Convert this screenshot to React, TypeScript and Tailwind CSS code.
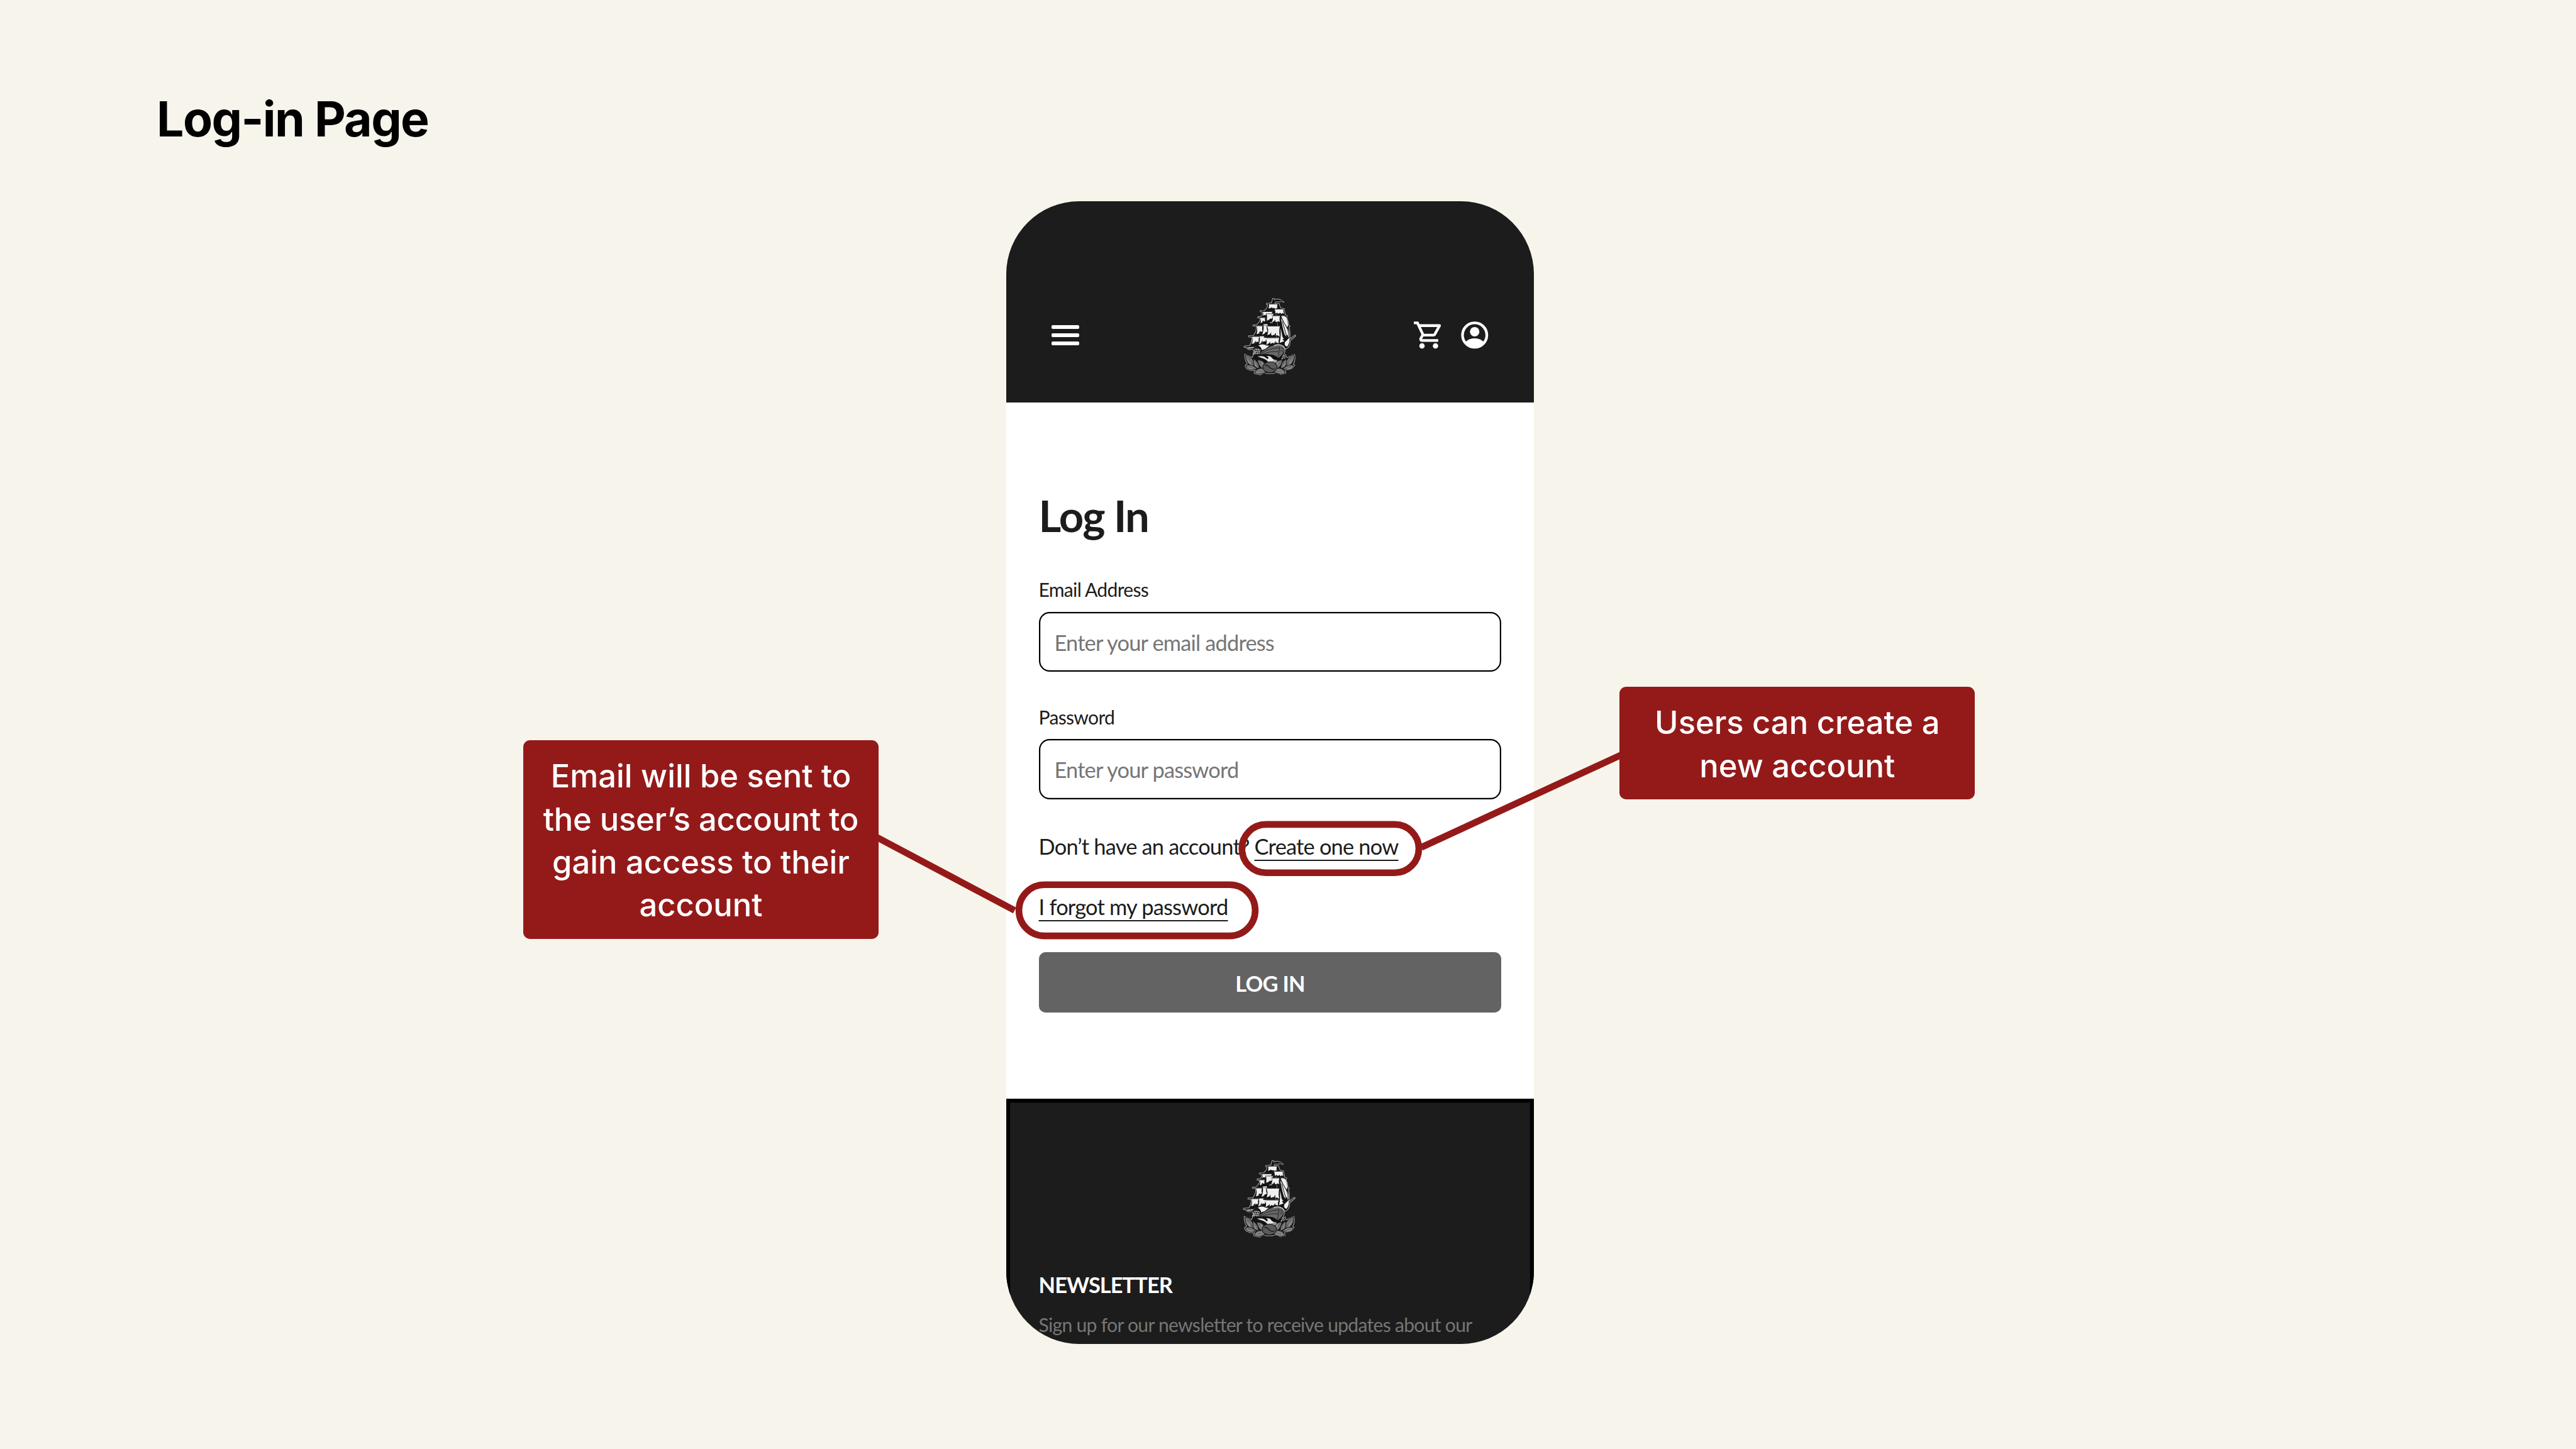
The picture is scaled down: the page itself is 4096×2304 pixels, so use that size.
const INK = "#141414";

const sails = [
  "M260 89 L314 89 Q309 102 313 116 L306 112 L300 118 L292 111 L284 113 L276 108 L268 114 Q262 113 258 116 Q264 102 260 89 Z",
  "M296 121 L351 121 Q348 134 355 148 L345 144 L338 149 L330 142 L320 148 L312 142 L300 147 Q303 134 296 121 Z",
  "M223 137 L281 137 L279 147 L244 148 L240 158 L232 155 Q226 158 223 162 Q228 149 223 137 Z",
  "M245 149 L290 149 Q280 162 283 178 L270 178 L260 186 L242 194 Q254 170 245 149 Z",
  "M206 174 L238 174 Q233 184 238 194 L226 195 L220 202 L209 206 Q213 188 206 174 Z",
  "M283 162 L329 162 Q324 180 329 199 L318 194 L308 200 L298 194 L278 200 Q290 180 283 162 Z",
  "M184 225 L220 225 Q216 242 221 258 L210 260 L204 268 L184 275 Q192 248 184 225 Z",
  "M226 214 L250 212 L255 222 L246 226 Q246 244 252 260 L240 262 L234 271 L218 278 Q232 246 226 214 Z",
  "M249 227 L328 227 Q322 258 328 289 L312 281 L300 286 L290 278 L280 284 L272 274 L250 280 Q262 254 249 227 Z",
  "M156 291 L200 291 Q194 306 197 322 L184 322 L176 330 L154 335 Q164 312 156 291 Z",
  "M202 289 L231 285 L228 296 L244 298 Q238 310 242 318 L226 320 L218 330 L198 336 Q208 312 202 289 Z",
  "M238 299 L325 299 Q318 314 321 332 L306 326 L294 334 L282 328 L270 336 L258 332 L242 344 Q254 322 238 299 Z",
  "M331 168 Q348 196 366 228 Q382 252 379 284 L372 278 L368 290 L358 276 Q346 240 331 168 Z",
  "M337 163 Q354 158 367 168 Q378 190 379 216 Q378 230 374 232 Q354 204 337 163 Z",
  "M332 236 Q342 268 344 290 L354 304 L344 306 L356 318 L327 329 Q338 286 332 236 Z",
  "M380 236 Q388 262 386 290 L380 296 Q384 262 380 236 Z",
  "M360 324 Q374 312 388 296 Q391 332 374 352 Q364 352 358 338 Z",
  "M194 346 Q222 330 246 346 L264 346 L238 366 L216 374 Q214 354 194 346 Z",
  "M124 358 L170 356 Q162 366 150 361 Q140 368 124 358 Z",
];

const spars = [
  "M244 86 H324",
  "M288 118 H356",
  "M206 133 H286",
  "M240 147 H294",
  "M190 170 H240",
  "M276 159 H374",
  "M162 221 H258",
  "M244 224 H332",
  "M134 287 H204",
  "M200 287 H246",
  "M236 296 H328",
  "M108 352 H184",
];

const folds =
  "M238 196 L250 180 L248 194 Z M264 276 L276 264 L272 280 Z M290 286 L304 266 L304 284 Z M196 268 L208 254 L210 264 Z M166 332 L178 316 L180 328 Z M208 334 L220 314 L222 326 Z M254 340 L268 322 L270 334 Z M290 334 L304 316 L302 330 Z M288 198 L300 186 L300 198 Z M216 202 L226 188 L226 198 Z";

const leafPaths = [
  "M116 401 Q166 420 172 468 Q156 478 142 466 Q112 440 116 401 Z",
  "M116 471 Q148 454 188 492 Q162 504 136 494 Q122 486 116 471 Z",
  "M164 428 Q196 446 202 490 Q178 486 167 466 Z",
  "M188 436 Q226 434 234 464 Q228 482 230 490 Q202 486 188 436 Z",
  "M172 518 Q182 482 226 488 Q236 504 240 513 Q202 530 172 518 Z",
];

/** Full-rigged ship riding above a coffee bean framed by leaves. */
function ShipLogo({ className }: { className: string }) {
  return (
    <svg viewBox="0 0 540 570" className={className} aria-label="Ship logo">
      <defs>
        <linearGradient id="leaf" x1="0" y1="0" x2="1" y2="1">
          <stop offset="0.1" stopColor="#707070" />
          <stop offset="0.6" stopColor="#8c8c8c" />
          <stop offset="1" stopColor="#4e4e4e" />
        </linearGradient>
        <linearGradient id="hull" x1="0" y1="1" x2="1" y2="0">
          <stop offset="0" stopColor="#2c2c2c" />
          <stop offset="0.4" stopColor="#6a6a6a" />
          <stop offset="1" stopColor="#5e5e5e" />
        </linearGradient>
      </defs>
      <path
        d="M284 53 L294 53 L294 62 Q314 52 336 62 L354 76 Q338 70 322 74 L302 74 L296 84 L324 84 L328 98 L334 112 L356 116 L356 124 L360 140 L362 156 L374 158 L374 168 L370 172 Q384 196 382 218 L392 224 L386 232 Q394 264 391 304 L422 280 L428 286 L392 318 Q394 346 376 362 L362 366 L358 392 L346 412 Q350 428 362 422 L352 410 L366 402 L366 414 L376 420 L420 399 Q428 436 412 462 L421 468 Q410 492 376 498 L360 500 L366 518 L334 526 L310 512 L286 520 L248 520 L232 514 L208 527 L174 522 L168 516 L176 500 Q136 504 118 484 L112 470 L126 460 Q108 430 111 398 L156 420 L172 386 L160 370 L132 370 L120 358 L106 356 L107 349 L140 346 Q158 320 154 294 L134 292 L134 284 L164 283 Q186 256 182 226 L162 225 L161 218 L184 216 Q208 196 206 176 L190 173 L192 166 L212 164 Q224 150 218 138 L206 136 L206 129 L232 128 Q254 110 252 92 L244 90 L244 84 L276 80 Z"
        fill={INK}
        stroke="#a9a9a9"
        strokeWidth="4"
        strokeLinejoin="round"
      />
      <path d="M289 58 V86 M304 68 Q326 60 346 72" stroke="#101010" strokeWidth="5" fill="none" />
      {sails.map((d) => (
        <path key={d} d={d} fill="#efefef" />
      ))}
      <path d={folds} fill={INK} />
      {spars.map((d) => (
        <path key={d} d={d} stroke="#4c4c4c" strokeWidth="2.5" fill="none" />
      ))}
      <path d="M331 166 Q346 238 352 300 M344 196 Q358 246 370 286" stroke={INK} strokeWidth="4" fill="none" />
      <path d="M308 150 V160 M314 202 V224 M308 288 V297 M320 290 V297" stroke="#b0b0b0" strokeWidth="2.5" />
      <ellipse cx="275" cy="203" rx="10" ry="4" fill="#8a8a8a" />

      {/* rigging at the stern */}
      <path
        d="M176 362 L160 402 M187 362 L173 402 M198 364 L186 400 M206 372 L198 396 M172 370 H206 M168 382 H206 M164 393 H202"
        stroke="#dcdcdc"
        strokeWidth="3"
        fill="none"
      />
      <path d="M388 314 L424 284" stroke="#8f8f8f" strokeWidth="2" />

      {/* hull */}
      <path
        d="M184 402 Q228 378 268 352 Q304 334 344 346 Q362 356 358 378 Q344 404 320 424 Q296 400 252 400 Q214 398 184 402 Z"
        fill="url(#hull)"
      />
      <path d="M292 346 Q324 332 350 350 L362 368" stroke="#cfcfcf" strokeWidth="5" fill="none" />
      <path
        d="M206 397 Q256 364 326 358 M222 400 Q270 378 322 384 M328 354 L318 420 M336 360 L356 368 M334 378 L352 380"
        stroke={INK}
        strokeWidth="3"
        fill="none"
      />
      <path d="M168 406 Q240 396 286 404 Q308 412 320 426 L346 416 L338 440 L300 440 L256 400 Z" fill="#0f0f0f" />

      {/* wave */}
      <path
        d="M190 413 Q226 406 244 424 Q254 434 257 424 Q258 414 246 411 Q270 408 280 424 Q290 437 310 436 L312 450 L258 450 Q244 430 220 424 Q206 420 190 413 Z"
        fill="#e6e6e6"
      />
      <path d="M264 452 Q282 436 310 438 L310 454 Z" fill="#9b9b9b" />
      <path d="M336 432 L346 416 L346 430 Z" fill="#dcdcdc" />

      {/* leaves, mirrored around the bean */}
      {["", "translate(534 0) scale(-1 1)"].map((transform) => (
        <g key={transform} transform={transform}>
          {leafPaths.map((d) => (
            <path key={d} d={d} fill="url(#leaf)" stroke={INK} strokeWidth="3" />
          ))}
          <path
            d="M128 420 Q146 440 160 464 M138 420 Q152 438 160 454 M136 476 Q156 482 174 490 M202 448 Q214 464 226 482 M180 450 L190 474 M194 510 Q212 504 226 502"
            stroke="#333333"
            strokeWidth="2.5"
            fill="none"
          />
        </g>
      ))}
      <ellipse cx="267" cy="480" rx="46" ry="36" fill={INK} />
      <ellipse cx="267" cy="480" rx="42" ry="32" fill="#5a5a5a" />
      <path d="M236 468 Q252 466 264 480 Q276 494 297 492" stroke={INK} strokeWidth="5" fill="none" strokeLinecap="round" />
    </svg>
  );
}

function MenuIcon() {
  return (
    <div className="flex h-[31.6px] w-[43.6px] flex-col justify-between">
      <span className="h-[5.8px] rounded-[2px] bg-white" />
      <span className="h-[5.8px] rounded-[2px] bg-white" />
      <span className="h-[5.8px] rounded-[2px] bg-white" />
    </div>
  );
}

function CartIcon() {
  return (
    <svg viewBox="0 0 24 24" className="size-[51.6px] fill-white">
      <path d="M15.55 13c.75 0 1.41-.41 1.75-1.03l3.58-6.49c.37-.66-.11-1.48-.87-1.48H5.21l-.94-2H1v2h2l3.6 7.59-1.35 2.44C4.52 15.37 5.48 17 7 17h12v-2H7l1.1-2h7.45zM6.16 6h12.15l-2.76 5H8.53L6.16 6zM7 18c-1.1 0-1.99.9-1.99 2S5.9 22 7 22s2-.9 2-2-.9-2-2-2zm10 0c-1.1 0-1.99.9-1.99 2s.89 2 1.99 2 2-.9 2-2-.9-2-2-2z" />
    </svg>
  );
}

function AccountIcon() {
  return (
    <svg viewBox="0 0 24 24" className="size-[51.6px]">
      <circle cx="12" cy="12" r="9" fill="none" stroke="white" strokeWidth="2" />
      <circle cx="12" cy="9.5" r="3.5" fill="white" />
      <path d="M5.4 16.9 Q8.3 14.4 12 14.4 T18.6 16.9 A8.9 8.9 0 0 1 12 21 A8.9 8.9 0 0 1 5.4 16.9 Z" fill="white" />
    </svg>
  );
}

function Field({ label, placeholder, className }: { label: string; placeholder: string; className: string }) {
  return (
    <div className={className}>
      <div className="h-[36px] text-[30.1px] leading-[36px] tracking-[-0.0235em]">{label}</div>
      <div className="mt-[17.3px] flex h-[95.7px] items-center rounded-[17px] pt-[3px] pl-[24.9px] text-[34.4px] leading-[40px] tracking-[-0.0238em] text-[#767676] shadow-[inset_0_0_0_2.2px_#000]">
        {placeholder}
      </div>
    </div>
  );
}

const link = "underline decoration-[2px] underline-offset-[7.5px] [text-decoration-skip-ink:none]";

function Phone() {
  return (
    <div className="ml-[203px] flex h-[1817.5px] w-[838.6px] shrink-0 flex-col overflow-hidden rounded-[116px] bg-white font-['Lato',sans-serif] text-[#1c1c1c]">
      <header className="relative flex h-[320.5px] shrink-0 items-start bg-[#1c1c1c] pt-[187.4px] pr-[68.4px] pl-[71.9px]">
        <div className="mt-[10.4px]">
          <MenuIcon />
        </div>
        <ShipLogo className="absolute top-[141px] left-[350.7px] h-[145.9px] w-[138.2px]" />
        <div className="ml-auto flex gap-[21.1px]">
          <CartIcon />
          <AccountIcon />
        </div>
      </header>

      <main className="flex h-[1106.8px] shrink-0 flex-col px-[51.4px] pt-[138.7px]">
        <h1 className="h-[82px] text-[68.8px] leading-[82px] font-bold tracking-[-0.025em]">Log In</h1>
        <Field label="Email Address" placeholder="Enter your email address" className="mt-[58.4px]" />
        <Field label="Password" placeholder="Enter your password" className="mt-[53.6px]" />
        <div className="mt-[55.5px] h-[40px] text-[34.4px] leading-[40px] tracking-[-0.0231em]">
          Don’t have an account? <span className={link}>Create one now</span>
        </div>
        <div className="mt-[55.9px] h-[40px] text-[34.4px] leading-[40px] tracking-[-0.0228em]">
          <span className={link}>I forgot my password</span>
        </div>
        <button className="mt-[51.8px] flex h-[96.2px] items-center justify-center rounded-[10.8px] bg-[#636363] pt-[3.5px] text-[34.4px] leading-[40px] font-bold tracking-[-0.0215em] text-white">
          LOG IN
        </button>
      </main>

      <footer className="flex h-[450px] shrink-0 flex-col bg-[#1c1c1c] px-[51.4px] pt-[85.4px] text-white shadow-[inset_0_0_0_6.2px_#000]">
        <ShipLogo className="ml-[298.5px] h-[145.9px] w-[138.2px]" />
        <h2 className="mt-[44.7px] h-[40px] text-[34.4px] leading-[40px] font-bold tracking-[-0.0275em]">NEWSLETTER</h2>
        <p className="mt-[22.8px] text-[30.1px] leading-[40px] tracking-[-0.0239em] whitespace-nowrap text-[#767676]">
          Sign up for our newsletter to receive updates about our
        </p>
      </footer>
    </div>
  );
}

const callout =
  "w-[565.4px] shrink-0 rounded-[10.8px] bg-[#941a1a] pt-[23.2px] text-center text-[50.7px] leading-[68.35px] font-medium whitespace-nowrap text-white";

export default function App() {
  return (
    <div className="relative h-[2304px] w-[4096px] overflow-hidden bg-[#f7f4eb] font-['Inter',sans-serif]">
      <h1 className="h-[319.7px] pt-[141.5px] pl-[249.1px] text-[76.9px] leading-[96px] font-bold tracking-[-0.021em] text-black">
        Log-in Page
      </h1>
      <section className="flex items-start pl-[831.8px]">
        <div className={`${callout} mt-[857.5px] h-[316px]`}>
          Email will be sent to
          <br />
          <span className="tracking-[-0.0055em]">the user’s account to</span>
          <br />
          gain access to their
          <br />
          account
        </div>
        <Phone />
        <div className={`${callout} mt-[772.3px] ml-[136.3px] h-[179.4px]`}>
          Users can create a
          <br />
          new account
        </div>
      </section>

      {/* highlight rings and connector lines */}
      <svg
        viewBox="0 0 5334 3000"
        preserveAspectRatio="none"
        className="absolute inset-0 h-[2304px] w-[4096px]"
        fill="none"
        stroke="#941a1a"
        strokeWidth="13.8"
      >
        <rect x="2571.5" y="1706.9" width="366.4" height="100.1" rx="50" />
        <rect x="2109.8" y="1831.8" width="489.3" height="105.8" rx="52.9" />
        <path d="M1812 1731.6 L2101 1885" />
        <path d="M3360 1561.5 L2943 1754.4" />
      </svg>
    </div>
  );
}
